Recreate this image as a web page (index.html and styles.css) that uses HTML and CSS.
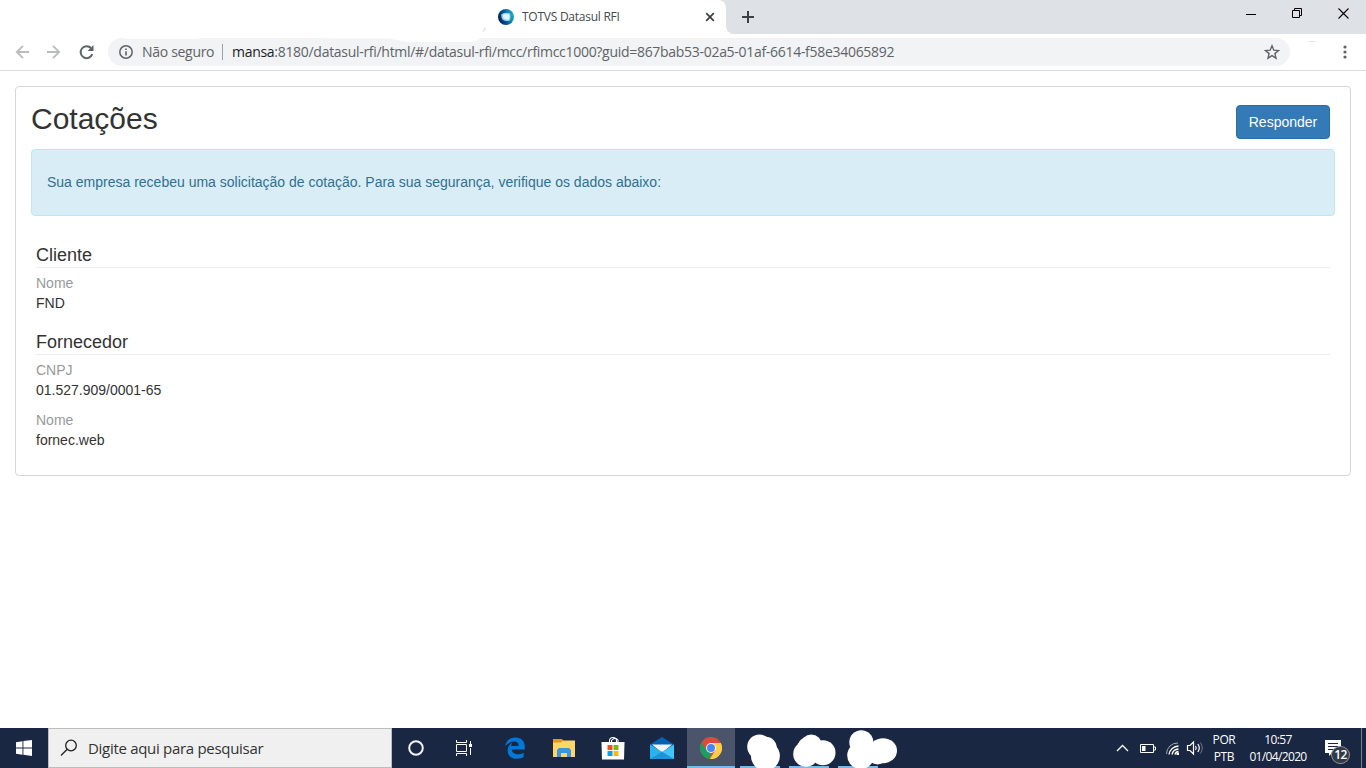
FILE: index.html
```html
<!DOCTYPE html>
<html lang="pt-BR">
<head>
    <meta charset="UTF-8">
    <title>TOTVS Datasul RFI</title>
    <link rel="stylesheet" href="styles.css">
</head>
<body>
    <div class="tabstrip">
        <div class="tab">
            <svg class="favicon" width="16" height="16" viewBox="0 0 16 16">
                <defs>
                    <linearGradient id="ring" x1="0" y1="0.6" x2="1" y2="0.3">
                        <stop offset="0" stop-color="#051a52"/>
                        <stop offset="0.45" stop-color="#08599a"/>
                        <stop offset="1" stop-color="#22b5cc"/>
                    </linearGradient>
                </defs>
                <circle cx="8" cy="8" r="8" fill="url(#ring)"/>
                <path d="M3.4 5.2Q7 2.8 11.8 4.3 13.5 7.5 11.9 11.4 7.8 12.8 4.7 10.7 2.8 8.2 3.4 5.2Z" fill="#8ed4e8"/>
                <path d="M5 6Q8 4.4 11 5.5 12 8 10.7 10.5 8 11 5.8 9.6 4.6 7.7 5 6Z" fill="#e2f4f8"/>
            </svg>
            <span class="tab-title">TOTVS Datasul RFI</span>
            <svg class="tab-close" width="10" height="10" viewBox="0 0 10 10"><path d="M1.2 1.2l7.6 7.6M8.8 1.2L1.2 8.8" stroke="#3c4043" stroke-width="1.7"/></svg>
        </div>
        <div class="tab-rest">
            <svg class="new-tab" width="12" height="12" viewBox="0 0 12 12"><path d="M6 0v12M0 6h12" stroke="#3c4043" stroke-width="2"/></svg>
            <svg class="window-buttons" width="98" height="12" viewBox="0 0 98 12" fill="none" stroke="#000">
                <path d="M0 6.5h10"/>
                <path d="M46.5 2.5h7v7h-7zM48.5 2.5v-2h7v7h-2"/>
                <path d="M92.500 .5l10 10M102.500 .5l-10 10" stroke-width="1.1"/>
            </svg>
        </div>
    </div>

    <div class="toolbar">
        <svg class="nav-icons" width="80" height="16" viewBox="0 0 80 16" fill="none" stroke="#babcbe" stroke-width="1.8">
            <path d="M14 8H2M8 1.8L1.8 8 8 14.2"/>
            <path d="M32 8h12M38 1.8L44.2 8 38 14.2"/>
            <path d="M76 4A6 6 0 1 0 77.3 10.2" stroke="#5f6368" stroke-width="2"/>
            <path d="M78.5 1v6h-6z" fill="#5f6368" stroke="none"/>
        </svg>
        <div class="address">
            <svg width="14" height="14" viewBox="0 0 14 14"><circle cx="7" cy="7" r="6.2" fill="none" stroke="#5f6368" stroke-width="1.5"/><path d="M7 6.2v4.3M7 3.4v1.6" stroke="#5f6368" stroke-width="1.6"/></svg>
            <span class="security">Não seguro</span>
            <span class="divider"></span>
            <span class="url"><b>mansa</b>:8180/datasul-rfi/html/#/datasul-rfi/mcc/rfimcc1000?guid=867bab53-02a5-01af-6614-f58e34065892</span>
            <svg class="star" width="16" height="16" viewBox="0 0 16 16"><path d="M8 1.8l1.8 4.400 4.700.3-3.600 3.100 1.100 4.600-4-2.500-4 2.500 1.100-4.600L1.500 6.500l4.700-.3z" fill="none" stroke="#5f6368" stroke-width="1.4"/></svg>
        </div>
        <svg class="menu" width="4" height="14" viewBox="0 0 4 14" fill="#5f6368"><circle cx="2" cy="2" r="1.6"/><circle cx="2" cy="7" r="1.6"/><circle cx="2" cy="12" r="1.6"/></svg>
        <svg class="eraser" width="1366" height="50" viewBox="0 0 1366 50">
            <path d="M118 8V36Q122 39 128 39H190Q200 39 202 37H320Q328 39 340 38.500H390Q400 41 410 42H470Q480 42 482 34V8Z" fill="#fff"/>
            <path d="M482 31l4-4v2l-3 3z" fill="#dee1e6"/>
            <path d="M1308 42q4-2 8 0z" fill="#dcdcdc"/>
        </svg>
    </div>

    <main>
        <div class="panel">
            <div class="panel-top">
                <h1>Cotações</h1>
                <button class="btn-primary">Responder</button>
            </div>
            <div class="alert">Sua empresa recebeu uma solicitação de cotação. Para sua segurança, verifique os dados abaixo:</div>
            <section>
                <h2>Cliente</h2>
                <dl>
                    <dt>Nome</dt>
                    <dd>FND</dd>
                </dl>
            </section>
            <section>
                <h2>Fornecedor</h2>
                <dl>
                    <dt>CNPJ</dt>
                    <dd>01.527.909/0001-65</dd>
                    <dt>Nome</dt>
                    <dd>fornec.web</dd>
                </dl>
            </section>
        </div>
    </main>

    <footer class="taskbar">
        <div class="start">
            <svg width="16" height="16" viewBox="0 0 16 16" fill="#fff"><path d="M0 2.200L6.500 1.300V7.500H0zM7.400 1.100L16 0V7.500H7.400zM0 8.400h6.500v6.300L0 13.800zM7.400 8.400H16V16l-8.600-1.200z"/></svg>
        </div>
        <div class="search">
            <svg width="18" height="18" viewBox="0 0 18 18" fill="none" stroke="#222" stroke-width="1.3"><circle cx="11" cy="6.500" r="5.300"/><path d="M7.200 10.300L1 16.500"/></svg>
            <span>Digite aqui para pesquisar</span>
        </div>
        <div class="task">
            <svg width="16" height="16" viewBox="0 0 16 16"><circle cx="8" cy="8" r="6.800" fill="none" stroke="#f2f2f2" stroke-width="2"/></svg>
        </div>
        <div class="task task-view">
            <svg width="16" height="16" viewBox="0 0 16 16" fill="none" stroke="#fff"><path d="M.5 0v2.500h10V0M.5 16v-2.500h10V16M.5 4.500h10v7H.500zM14.500 1v3M14.500 8v7"/><path d="M13 4h3v3h-3z" fill="#fff" stroke="none"/></svg>
        </div>
        <div class="task">
            <svg width="20" height="22" viewBox="0 0 20 22"><path d="M0 9.500C1 3.500 5 .5 10.500.5c6 0 9.300 4 9.300 9.500v2.500H6.800c.2 3.300 3 4.700 6.200 4.700 2.200 0 4-.5 5.700-1.500v4.400c-2 1.200-4.300 1.700-6.800 1.700-5.500 0-9.300-3.200-9.300-8.400 0-3.400 1.700-6.200 4.800-7.700-.8 1-1.200 2-1.400 3.200h7.600c0-2.700-1.300-4.300-4.200-4.300C5.500 4.600 2.200 6.500 0 9.500z" fill="#0078d7"/></svg>
        </div>
        <div class="task">
            <svg width="22" height="20" viewBox="0 0 22 20"><path d="M0 1h9l1.500 2V5H0z" fill="#e09b10"/><path d="M0 4.500h8l2-2h12V19H0z" fill="#ffd667"/><path d="M4 19v-7l2-2h10l2 2v7h-4v-4H8v4z" fill="#3a96dd"/></svg>
        </div>
        <div class="task">
            <svg width="24" height="24" viewBox="0 0 24 24"><path d="M8.500 7V5Q8.500 1.500 12 1.500T15.500 5v2M10.500 7V4.500Q14 .5 17 4V7" fill="none" stroke="#fff" stroke-width="1.100"/><path d="M.5 6h23l-.5 17.500H1z" fill="#fff"/><path d="M6.500 9h5v5h-5z" fill="#f25022"/><path d="M12.500 9h5v5h-5z" fill="#7fba00"/><path d="M6.500 15h5v5h-5z" fill="#00a4ef"/><path d="M12.500 15h5v5h-5z" fill="#ffb900"/></svg>
        </div>
        <div class="task">
            <svg width="24" height="22" viewBox="0 0 24 22"><path d="M0 7.500L12 0l12 7.500v3H0z" fill="#0461b4"/><path d="M2 7.500h20L12 16z" fill="#f5f5f5"/><path d="M0 7.500L24 22H0z" fill="#26b3ee"/><path d="M24 7.500V22H0z" fill="#41c5f8"/><path d="M24 22L12 14.700 0 22z" fill="#1c94dc"/></svg>
        </div>
        <div class="task running active">
            <svg width="22" height="22" viewBox="0 0 22 22"><circle cx="11" cy="11" r="11" fill="#db4c3f"/><path d="M1.500 5.500L6.700 13.500 11 16 9.800 22A11 11 0 0 1 1.500 5.500z" fill="#18a05e"/><path d="M11 6h9.800A11 11 0 0 1 9.800 22L15.300 13.500z" fill="#ffce44"/><circle cx="11" cy="11" r="5" fill="#f2f2f2"/><circle cx="11" cy="11" r="4" fill="#4587f3"/></svg>
        </div>
        <div class="task running">
            <svg class="blob" width="60" height="40" viewBox="0 0 60 40" fill="#fff"><circle cx="23.5" cy="18.700" r="12.300"/><circle cx="29.700" cy="19.700" r="11"/><circle cx="29.400" cy="28" r="14.500"/></svg>
        </div>
        <div class="task running">
            <svg class="blob" width="60" height="40" viewBox="0 0 60 40" fill="#fff"><circle cx="26.300" cy="17" r="10.500"/><circle cx="21" cy="26" r="12.800"/><circle cx="24" cy="20" r="11.500"/><circle cx="38" cy="24.700" r="12.500"/></svg>
        </div>
        <div class="task running">
            <svg class="blob" width="66" height="40" viewBox="0 0 66 40" fill="#fff"><circle cx="27.300" cy="14.200" r="12"/><circle cx="26.700" cy="27.500" r="13.500"/><ellipse cx="49" cy="22.700" rx="14" ry="12.500"/><circle cx="43.500" cy="26.500" r="10"/><circle cx="38" cy="23" r="8"/></svg>
        </div>
        <div class="tray">
            <svg width="92" height="16" viewBox="0 0 92 16" fill="none" stroke="#fff">
                <path d="M1 11l5.500-5.500L12 11" stroke-width="1.300"/>
                <path d="M24.500 4.500h13v8h-13zM38 7h1.500v3H38"/>
                <path d="M26 6h3.500v5H26z" fill="#fff" stroke="none"/>
                <path d="M50.500 14A11 11 0 0 1 62 3" stroke="#a4abb8"/>
                <path d="M53 14.500A10 10 0 0 1 62.500 6M56 14.500A7 7 0 0 1 62.500 9M59 14.500a4 4 0 0 1 3.500-3" stroke-width="1.300"/>
                <path d="M60.500 12.500h2.500v2.500h-2.500z" fill="#fff" stroke="none"/>
                <path d="M71.500 5.500H74L77.500 2v12L74 10.500h-2.500zM79.500 6q1.500 2 0 4M81.800 4q3 4 0 8" stroke-width="1.200"/>
                <path d="M84.500 2.500q3.500 5.500 0 11" stroke="#6c7689"/>
            </svg>
            <div class="lang">POR<br>PTB</div>
            <div class="clock"><span>10:57</span><br>01/04/2020</div>
            <div class="notifications">
                <svg width="16" height="16" viewBox="0 0 16 16"><path d="M0 0h16v13H7l-3 3v-3H0z" fill="#fff"/><path d="M3 3.500h10M3 6.500h10M3 9.500h7" stroke="#1a2742"/></svg>
                <span class="count">12</span>
            </div>
            <div class="show-desktop"></div>
        </div>
    </footer>
</body>
</html>
```
FILE: styles.css
```css
* {
    box-sizing: border-box;
}

body {
    margin: 0;
    height: 768px;
    display: flex;
    flex-direction: column;
    overflow: hidden;
    background: #fff;
    font-family: "Liberation Sans", Arial, sans-serif;
    font-size: 14px;
    line-height: 20px;
    color: #333;
}

svg {
    display: block;
    flex: none;
}

/* Browser */
.tabstrip,
.toolbar,
.taskbar {
    font-family: "Open Sans", "Noto Sans", sans-serif;
}

.tabstrip {
    height: 34px;
    display: flex;
    background: #fff;
}

.tab {
    width: 726px;
    padding: 0 11px 0 498px;
    display: flex;
    align-items: center;
    background: #fff;
    border-top-right-radius: 8px;
    box-shadow: 8px -8px 0 #dee1e6;
}

.tab-title {
    margin-left: 8px;
    font-size: 12px;
    letter-spacing: -0.25px;
    color: #45494d;
    white-space: nowrap;
}

.tab-close {
    margin-left: auto;
}

.tab-rest {
    flex: 1;
    display: flex;
    align-items: center;
    padding: 0 22px 0 16px;
    background: #dee1e6;
    border-bottom-left-radius: 8px;
}

.window-buttons {
    margin-left: auto;
    margin-bottom: 6px;
    overflow: visible;
}

.toolbar {
    position: relative;
    height: 37px;
    display: flex;
    align-items: center;
    padding: 0 19px 1px 14px;
    border-bottom: 1px solid #dadce0;
}

.nav-icons {
    margin-right: -1px;
    margin-left: 1px;
}

.address {
    width: 1182px;
    height: 28px;
    margin-left: 14px;
    padding: 0 10px 0 11px;
    display: flex;
    align-items: center;
    border-radius: 14px;
    background: #f1f3f4;
    font-size: 14px;
    color: #5f6368;
    white-space: nowrap;
}

.security {
    width: 72px;
    margin-left: 9px;
    letter-spacing: -0.3px;
}

.divider {
    width: 1px;
    height: 16px;
    margin: 0 9px 0 8px;
    background: #9aa0a6;
}

.url {
    letter-spacing: -0.295px;
}

.url b {
    font-weight: normal;
    color: #202124;
}

.star {
    margin-left: auto;
}

.menu {
    margin-left: auto;
}

/* painted-over area around the tab */
.eraser {
    position: absolute;
    left: 0;
    top: -34px;
    clip-path: inset(25px 0 0 0);
}

/* Page */
main {
    flex: 1;
    padding: 15px;
}

.panel {
    height: 390px;
    padding: 15px;
    border: 1px solid #d6d6d6;
    border-radius: 4px;
}

.panel-top {
    height: 47px;
    display: flex;
    justify-content: space-between;
    padding-right: 5px;
}

h1 {
    margin: 0;
    font-size: 30px;
    font-weight: normal;
    line-height: 33px;
}

.btn-primary {
    height: 34px;
    width: 94px;
    margin-top: 3px;
    padding: 0;
    border: 1px solid #2e6da4;
    border-radius: 4px;
    background: #337ab7;
    color: #fff;
    font-family: inherit;
    font-size: 14px;
}

.alert {
    height: 67px;
    padding: 22px 15px;
    border: 1px solid #bce8f1;
    border-radius: 4px;
    background: #d9edf7;
    color: #31708f;
}

section {
    margin: 0 5px;
}

.alert + section {
    margin-top: 29px;
}

section + section {
    margin-top: 19px;
}

h2 {
    height: 23px;
    margin: 0;
    border-bottom: 1px solid #eee;
    font-size: 18px;
    font-weight: normal;
    line-height: 20px;
}

dl {
    margin: 5px 0 0;
}

dt {
    color: #999;
}

dd {
    margin: 0;
}

dd + dt {
    margin-top: 10px;
}

/* Windows taskbar */
.taskbar {
    height: 40px;
    display: flex;
    background: #1a2742;
    color: #fff;
}

.start {
    width: 48px;
    display: flex;
    align-items: center;
    justify-content: center;
}

.search {
    width: 344px;
    padding-left: 11px;
    display: flex;
    align-items: center;
    gap: 10px;
    background: #f0f0f0;
    border: 1px solid #bdbdbd;
    color: #333;
    font-size: 15px;
    letter-spacing: -0.3px;
}

.task {
    position: relative;
    width: 48px;
    margin-right: 1px;
    display: flex;
    align-items: center;
    justify-content: center;
}

.search + .task {
    margin-right: 0;
}

.task-view {
    margin-right: 3px;
}

.running::before {
    content: "";
    position: absolute;
    left: 4px;
    right: 4px;
    bottom: 0;
    height: 2px;
    background: #76b9ed;
}

.active {
    background: #4a546a;
}

.active::before {
    left: 0;
    right: 0;
}

.blob {
    position: absolute;
    left: 0;
    top: 0;
}

.tray {
    margin-left: auto;
    display: flex;
    align-items: center;
    font-size: 12px;
    line-height: 17px;
    text-align: center;
}

.lang {
    width: 28px;
    margin-left: 2px;
    letter-spacing: -0.4px;
}

.clock {
    width: 66px;
    margin-left: 6px;
    letter-spacing: -0.65px;
    white-space: nowrap;
}

.notifications {
    position: relative;
    margin-left: 14px;
}

.tray > svg,
.lang {
    transform: translateX(-1px);
}

.count {
    position: absolute;
    left: 6px;
    top: 6px;
    width: 19px;
    height: 18px;
    border: 1px solid #8b919c;
    border-radius: 50%;
    background: #333a45;
    font-size: 12px;
    font-weight: 600;
    line-height: 16px;
    letter-spacing: -0.5px;
}

.show-desktop {
    width: 5px;
    height: 40px;
    margin-left: 20px;
    border-left: 1px solid #7b8394;
}
```
